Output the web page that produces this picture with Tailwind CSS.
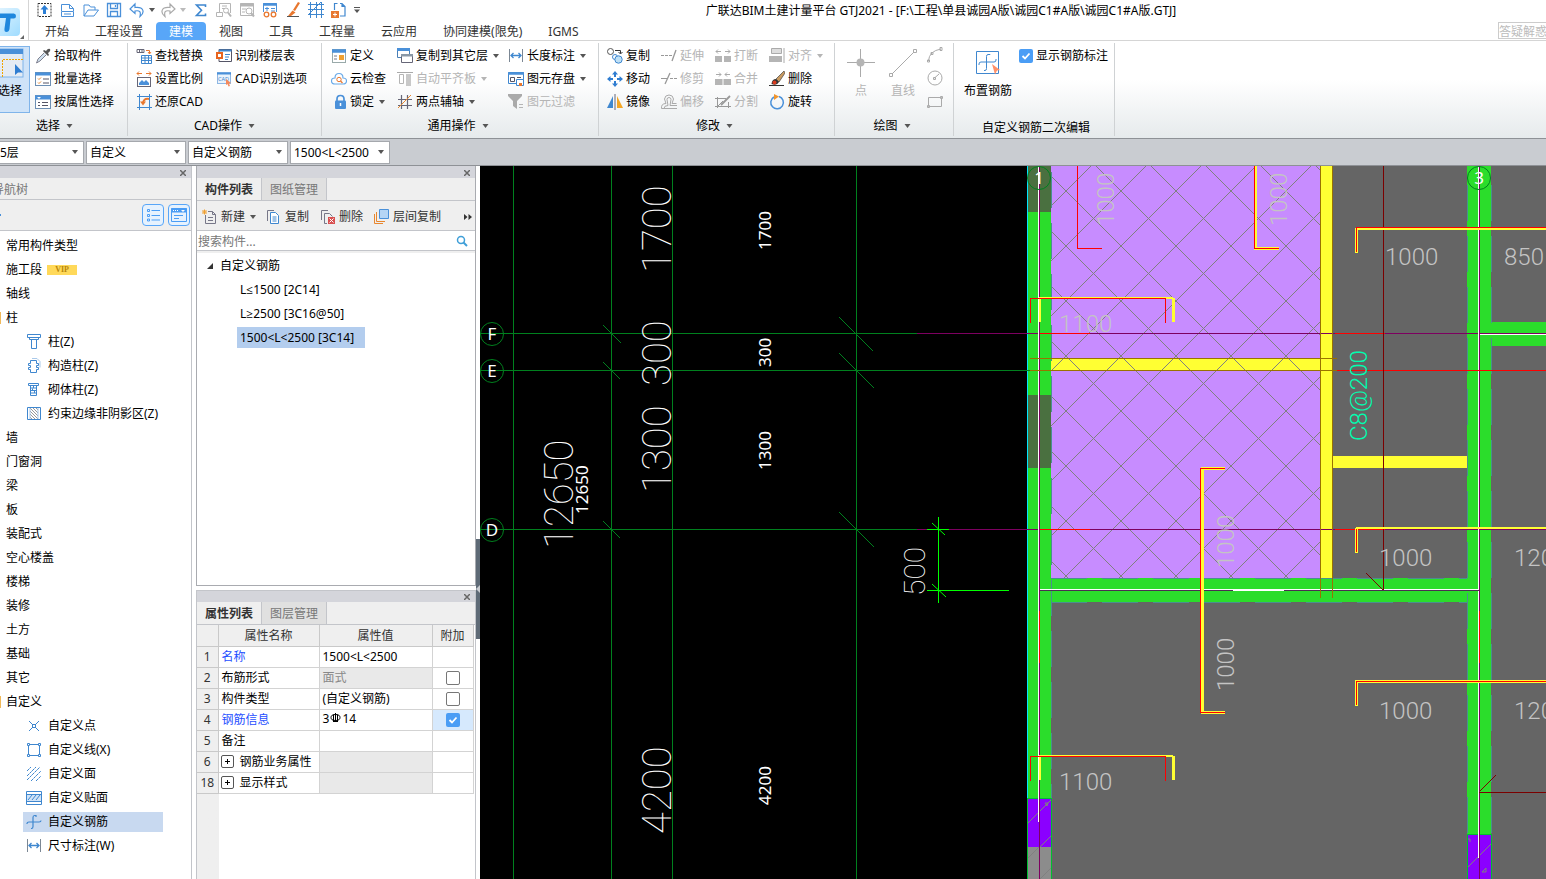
<!DOCTYPE html>
<html lang="zh-CN">
<head>
    <meta charset="UTF-8">
    <meta name="viewport" content="width=device-width, initial-scale=1.0">
    <title>广联达BIM土建计量平台 GTJ2021</title>
    <script src="https://cdn.jsdelivr.net/npm/@tailwindcss/browser@4"></script>
</head>
<body class="flex h-screen flex-col overflow-hidden bg-white font-['Noto_Sans','Noto_Sans_CJK_SC',sans-serif] text-xs text-black">

    <!-- 公用图标 -->
    <svg class="hidden">
        <symbol id="caret" viewBox="0 0 6 4"><path d="M0 0h6L3 4z" fill="currentColor"/></symbol>
        <symbol id="close" viewBox="0 0 6 6"><path d="M0 0l6 6M6 0L0 6" stroke="#666" stroke-width="1.5"/></symbol>
        <symbol id="dim" viewBox="0 0 16 16"><path d="M1.500 1v13M14.500 1v13" stroke="#7b8794" fill="none"/><path d="M3 7.500h10M5.500 5L3 7.500 5.500 10M10.500 5L13 7.500 10.500 10" stroke="#3f87cf" fill="none" stroke-width="1.300"/></symbol>
    </svg>

    <!-- 标题栏和选项卡 -->
    <header class="flex h-[41px] shrink-0 border-b border-[#d5d5d5]">
        <div class="relative w-[29px] shrink-0 overflow-hidden border-r border-[#d5d5d5]">
            <svg class="h-10 w-7" viewBox="0 0 28 40">
                <defs><linearGradient id="lg" x1="0" y1="0" x2="1" y2="1"><stop offset="0" stop-color="#eaf7ff"/><stop offset="1" stop-color="#9fdcff"/></linearGradient></defs>
                <rect x="-10" y="8" width="30" height="28" rx="4" fill="url(#lg)"/>
                <path d="M0 13.500h13q3-.5 3 2.500t-3 2.500h-2.500L9.500 29q-.5 3-3 3t-2-3.500L6 18H0z" fill="#1f87dd"/>
                <path d="M24 35v4h-4z" fill="#666"/>
            </svg>
        </div>
        <div class="flex min-w-0 flex-1 flex-col">
            <div class="flex h-[21px] items-center pl-2">
                <button class="w-[23px]" title="导入"><svg class="size-4" viewBox="0 0 16 16"><rect x="1" y="1.500" width="13" height="13" fill="none" stroke="#333" stroke-dasharray="2 1"/><path d="M7.500 3l4 4.500H9V12H6V7.500H3.500z" fill="#2c7fd6"/></svg></button>
                <button class="w-[23px]" title="新建"><svg class="size-4" viewBox="0 0 16 16" fill="none" stroke="#4a90d9"><path d="M1.500 9V2.500h8l4 4V9M9.500 2.500v4h4M1.500 9.500h12v5h-12zM4 12h7"/></svg></button>
                <button class="w-[23px]" title="打开"><svg class="size-4" viewBox="0 0 16 16" fill="none" stroke="#4a90d9"><path d="M1 14V3h5l1.500 2H12v3M1 14l4-6h10.500L11 14z"/></svg></button>
                <button class="w-[23px]" title="保存"><svg class="size-4" viewBox="0 0 16 16" fill="none" stroke="#4a90d9" stroke-width="1.300"><path d="M1.500 1.500h13v13h-13zM4.500 1.500v5h7v-5M4.500 14.500v-5h7v5M9.500 3v2"/></svg></button>
                <button class="flex w-[31px] items-center gap-1 text-[#555]" title="撤销"><svg class="size-4" viewBox="0 0 16 16" fill="none" stroke="#4a90d9" stroke-width="1.200"><path d="M6 2L1 7l5 4.500V9c5-1 6 1 5 5.500 5-4 4-10-5-9z"/></svg><svg class="h-1 w-1.5"><use href="#caret"/></svg></button>
                <button class="flex w-[33px] items-center gap-1 text-[#bbb]" title="恢复"><svg class="size-4" viewBox="0 0 16 16" fill="none" stroke="#aaa" stroke-width="1.200"><path d="M10 2l5 5-5 4.500V9C5 8 4 10 5 14.500 0 10.500 1 4.500 10 5.500z"/></svg><svg class="h-1 w-1.5"><use href="#caret"/></svg></button>
                <button class="w-[23px]" title="汇总"><svg class="size-4" viewBox="0 0 16 16" fill="none" stroke="#3f87cf" stroke-width="1.600"><path d="M12.500 5V3h-9l5 5.200-5 5.300h9v-2"/></svg></button>
                <button class="w-[23px]" title="查看工程量"><svg class="size-4" viewBox="0 0 16 16" fill="none" stroke="#b5b5b5"><path d="M3.500 10V1.500h11V11M.5 10.500h6v4h-6zM6 4h5M6 6.500h3"/><circle cx="10" cy="8.500" r="2.500"/><path d="M12 10.500l3 4" stroke-width="2"/></svg></button>
                <button class="w-[23px]" title="查看计算式"><svg class="size-4" viewBox="0 0 16 16" fill="none" stroke="#b5b5b5"><path d="M1.500 1.500h13v12h-13z"/><path d="M1 3h14" stroke-width="3"/><path d="M3 7h4M3 10h3"/><circle cx="10" cy="9" r="3"/><path d="M12 11l3 3.500" stroke-width="2"/></svg></button>
                <button class="w-[23px]" title="查看三维"><svg class="size-4" viewBox="0 0 16 16" fill="none"><path d="M1.500 10V1.500h13V10" stroke="#4a90d9"/><path d="M1 2.500h14" stroke="#4a90d9" stroke-width="2.500"/><path d="M3 6.500h4M9 6.500h4M5 5v4M9 9h4" stroke="#4a90d9"/><circle cx="4.500" cy="12.500" r="2.300" stroke="#e8772e" stroke-width="1.300"/><circle cx="11.500" cy="12.500" r="2.300" stroke="#e8772e" stroke-width="1.300"/></svg></button>
                <button class="w-[23px]" title="格式刷"><svg class="size-4" viewBox="0 0 16 16"><path d="M13 0l2 1-5 8-2-1z" fill="#e8772e"/><path d="M7.500 8.500l3 2-4.500 3.500H3z" fill="#e8772e"/><path d="M2 14.500h12" stroke="#555"/></svg></button>
                <button class="w-[23px]" title="轴网"><svg class="size-4" viewBox="0 0 16 16" fill="none" stroke="#3f87cf"><path d="M0 2.500h16M0 7.500h16M0 12.500h16M2.500 0v16M8.500 0v16M13.500 0v16M0 13L13 0"/></svg></button>
                <button class="w-[23px]" title="添加"><svg class="size-4" viewBox="0 0 16 16" fill="none"><path d="M3.500 8V1.500h3M9 1.500h2l3 3V14H9M11 1.500v3h3" stroke="#3f87cf" stroke-width="1.200"/><rect y="9" width="8" height="7" fill="#e8772e"/><path d="M4 10.500v4M2 12.500h4" stroke="#fff"/></svg></button>
                <button class="text-[#555]" title="更多"><svg class="h-1.5 w-1.5" viewBox="0 0 6 6"><path d="M0 .5h6" stroke="currentColor"/><path d="M0 2.500h6L3 6z" fill="currentColor"/></svg></button>
                <h1 class="flex-1 truncate pt-0.5 pr-6 text-center">广联达BIM土建计量平台 GTJ2021 - [F:\工程\单县诚园A版\诚园C1#A版\诚园C1#A版.GTJ]</h1>
            </div>
            <div class="flex h-5 items-end pl-[3px]">
                <nav class="flex text-[#333]">
                    <a href="#" class="h-[18px] px-[13px] leading-5">开始</a>
                    <a href="#" class="h-[18px] px-[13px] leading-5">工程设置</a>
                    <a href="#" class="h-[18px] rounded-t-sm bg-[#58a6f8] px-[13px] leading-5 text-white">建模</a>
                    <a href="#" class="h-[18px] px-[13px] leading-5">视图</a>
                    <a href="#" class="h-[18px] px-[13px] leading-5">工具</a>
                    <a href="#" class="h-[18px] px-[13px] leading-5">工程量</a>
                    <a href="#" class="h-[18px] px-[13px] leading-5">云应用</a>
                    <a href="#" class="h-[18px] px-[13px] leading-5">协同建模(限免)</a>
                    <a href="#" class="h-[18px] px-[13px] leading-5">IGMS</a>
                </nav>
                <input aria-label="答疑解惑" class="mb-px ml-auto h-[17px] w-12 border border-r-0 border-[#ccc] pt-0.5 placeholder:text-[#bbb]" placeholder="答疑解惑">
            </div>
        </div>
    </header>

    <!-- 功能区 -->
    <section class="flex h-[98px] shrink-0 border-b border-[#8e9196] bg-linear-to-b from-white from-40% to-[#e6eaec] py-0.5 whitespace-nowrap">
        <div class="flex w-32 flex-col border-r border-[#cfd2d4]">
            <div class="flex flex-1">
                <button class="mt-[3px] flex h-[67px] w-[30px] flex-col items-start border border-l-0 border-[#7fb4ea] bg-[#cfe3f8]">
                    <svg class="h-8 w-6" viewBox="0 0 24 32"><rect x="-6" y="2" width="29" height="28" fill="#e4ebf4" stroke="#7fb4ea"/><path d="M0 2h23v5H0z" fill="#4a90d9"/><path d="M2.500 30V12.500H23" fill="none" stroke="#f0a400" stroke-dasharray="2 1"/><path d="M15 17v11l3-2.500h5z" fill="#2f7dd1"/></svg>
                    <span class="mt-1 -ml-0.5">选择</span>
                </button>
                <div class="flex flex-col pt-px pl-[5px]">
                    <button class="flex h-[23px] items-center gap-[3px]"><svg class="size-4" viewBox="0 0 16 16"><path d="M15 1q-2-1-4 2L9 2 8 3l5 5 1-1-1-2q3-2 2-4z" fill="#555"/><path d="M9 5L3 11l-1.500 4L5 13l6-6" fill="#cfe0ee" stroke="#667" stroke-width=".8"/></svg>拾取构件</button>
                    <button class="flex h-[23px] items-center gap-[3px]"><svg class="size-4" viewBox="0 0 16 16" fill="none"><rect x=".5" y="1.500" width="15" height="13" fill="#fff" stroke="#6d8fb3"/><path d="M0 3h16" stroke="#4a90d9" stroke-width="3"/><path d="M3 7.500l1 1 2-2M3 11.500l1 1 2-2" stroke="#e8872e"/><path d="M8 8h6M8 12h6" stroke="#556"/></svg>批量选择</button>
                    <button class="flex h-[23px] items-center gap-[3px]"><svg class="size-4" viewBox="0 0 16 16" fill="none"><rect x=".5" y="1.500" width="15" height="13" fill="#fff" stroke="#6d8fb3"/><path d="M0 3.500h16" stroke="#4a90d9" stroke-width="4"/><path d="M2 3h4L4 5z" fill="#fff"/><path d="M3 8.500h2M7 8.500h6M3 11.500h2M7 11.500h6" stroke="#556"/></svg>按属性选择</button>
                </div>
            </div>
            <button class="flex h-[22px] items-center justify-center gap-1.5 pt-0.5 pr-[18px]">选择<svg class="h-1 w-[7px] text-[#555]"><use href="#caret"/></svg></button>
        </div>

        <div class="flex w-[194px] flex-col border-r border-[#cfd2d4]">
            <div class="flex flex-1 pt-px pl-2">
                <div class="w-20">
                    <button class="flex h-[23px] items-center gap-[3px]"><svg class="size-4" viewBox="0 0 16 16" fill="none"><path d="M1 1.500h7v3H1zM3.500 1.500v3M6 1.500v3" stroke="#667"/><path d="M10 2.500h3.500v3M12 4l1.500 2L15 4" stroke="#e8772e"/><path d="M5.500 7.500h10v8h-10zM5.500 10h10M5.500 12.500h10M9 7.500v8M12.500 7.500v8" stroke="#3f87cf"/></svg>查找替换</button>
                    <button class="flex h-[23px] items-center gap-[3px]"><svg class="size-4" viewBox="0 0 16 16" fill="none"><path d="M1 2.500h5M10 2.500h5M3 .5L1 2.500l2 2M13 .5l2 2-2 2" stroke="#e8772e"/><rect x="1.500" y="6.500" width="13" height="9" stroke="#667"/><path d="M3 14v-2l3-3 2 2 2-2 3 3v2z" fill="#4a90d9"/></svg>设置比例</button>
                    <button class="flex h-[23px] items-center gap-[3px]"><svg class="size-4" viewBox="0 0 16 16" fill="none"><path d="M3.500 0v16M13.500 0v16M1 2.500h15M1 13.500h15" stroke="#3f87cf"/><path d="M13 5q-6-1-6 5" stroke="#e8772e" stroke-width="2"/><path d="M4 7.500h6l-3 4z" fill="#e8772e"/></svg>还原CAD</button>
                </div>
                <div>
                    <button class="flex h-[23px] items-center gap-[3px]"><svg class="size-4" viewBox="0 0 16 16" fill="none"><path d="M3 1.500h12.500v12H3z" fill="#fff" stroke="#556"/><path d="M3 2.500h12.500" stroke="#3f87cf" stroke-width="2"/><rect x="0" y="4" width="7" height="7" fill="#e8641e"/><path d="M2 6h3v3H2z" fill="#fff"/><path d="M9 6.500h5M9 9h4M9 11.500h3" stroke="#3f87cf"/></svg>识别楼层表</button>
                    <button class="flex h-[23px] items-center gap-[3px]"><svg class="size-4" viewBox="0 0 16 16" fill="none"><rect x="1.500" y="1.500" width="13" height="11" fill="#eaf3fc" stroke="#8fb8e4"/><path d="M1 2.500h14" stroke="#4a90d9" stroke-width="2"/><text x="2" y="10" font-size="5.500" fill="#3f87cf">CAD</text><path d="M10 8l5 4-2 .5 1 2.500-1.500.5-1-2.500L10 14z" fill="#f58a5c"/></svg>CAD识别选项</button>
                </div>
            </div>
            <button class="flex h-[22px] items-center justify-center gap-1.5 pt-0.5">CAD操作<svg class="h-1 w-[7px] text-[#555]"><use href="#caret"/></svg></button>
        </div>

        <div class="flex w-[277px] flex-col border-r border-[#cfd2d4]">
            <div class="flex flex-1 pt-px pl-[9px]">
                <div class="w-[66px]">
                    <button class="flex h-[23px] items-center gap-[3px]"><svg class="size-4" viewBox="0 0 16 16" fill="none"><rect x="1.500" y="1.500" width="13" height="13" fill="#fff" stroke="#9aa"/><path d="M1 3h14" stroke="#4a90d9" stroke-width="3.500"/><path d="M3 8h3M3 11h3" stroke="#778"/><rect x="8" y="7" width="5" height="5" fill="#f0a030"/></svg>定义</button>
                    <button class="flex h-[23px] items-center gap-[3px]"><svg class="size-4" viewBox="0 0 16 16" fill="none"><path d="M4 13q-3.500 0-3.500-3T4 7q0-4.500 4-4.500T12 7q3.500 0 3.500 3T12 13z" stroke="#6aaae8" stroke-width="1.200"/><circle cx="8" cy="8.500" r="2.200" stroke="#e8772e"/><path d="M9.500 10l2 2" stroke="#e8772e" stroke-width="1.300"/></svg>云检查</button>
                    <button class="flex h-[23px] items-center gap-[3px]"><svg class="size-4" viewBox="0 0 16 16" fill="none"><path d="M6 7V5q0-3.500 3.500-3.500T13 5v2" stroke="#4a90d9" stroke-width="1.700"/><rect x="4" y="6.500" width="11" height="8.500" rx="1" fill="#4a90d9"/><path d="M9.500 9v3" stroke="#fff" stroke-width="1.500"/></svg>锁定<svg class="ml-0.5 h-1 w-1.5 text-[#555]"><use href="#caret"/></svg></button>
                </div>
                <div class="w-[111px]">
                    <button class="flex h-[23px] items-center gap-[3px]"><svg class="size-4" viewBox="0 0 16 16"><path d="M.5.5h12v9H.5z" fill="#fff" stroke="#4a7fb5"/><path d="M0 0h13v3H0z" fill="#4a90d9"/><path d="M4.500 6.500h11v8h-11z" fill="#fff" stroke="#667"/><path d="M4 6h12v2.500H4z" fill="#8a98a6"/></svg>复制到其它层<svg class="ml-0.5 h-1 w-1.5 text-[#555]"><use href="#caret"/></svg></button>
                    <button class="flex h-[23px] items-center gap-[3px] text-[#b5b5b5]"><svg class="size-4" viewBox="0 0 16 16"><path d="M0 1.500h16" stroke="#aaa"/><path d="M2.500 3.500h4v9h-4z" fill="#fff" stroke="#b5b5b5"/><path d="M9 3h5v12H9z" fill="#c8c8c8"/></svg>自动平齐板<svg class="ml-0.5 h-1 w-1.5"><use href="#caret"/></svg></button>
                    <button class="flex h-[23px] items-center gap-[3px]"><svg class="size-4" viewBox="0 0 16 16" fill="none"><path d="M4.500 1v14M10.500 1v14M1 5.500h14M1 11.500h14" stroke="#667" stroke-width="1.200"/><path d="M1 14L14 1" stroke="#e8872e"/></svg>两点辅轴<svg class="ml-0.5 h-1 w-1.5 text-[#555]"><use href="#caret"/></svg></button>
                </div>
                <div>
                    <button class="flex h-[23px] items-center gap-[3px]"><svg class="size-4"><use href="#dim"/></svg>长度标注<svg class="ml-0.5 h-1 w-1.5 text-[#555]"><use href="#caret"/></svg></button>
                    <button class="flex h-[23px] items-center gap-[3px]"><svg class="size-4" viewBox="0 0 16 16" fill="none"><path d="M.5 1.500h15v11H.5z" fill="#fff" stroke="#3f87cf"/><path d="M0 2.500h16" stroke="#4a90d9" stroke-width="2.500"/><path d="M2.500 6.500h4v4h-4zM9 6.500h4" stroke="#556"/><path d="M8.500 8.500h7v6h-7z" fill="#fff" stroke="#3f87cf"/><rect x="11" y="12" width="3" height="3" fill="#e8772e"/></svg>图元存盘<svg class="ml-0.5 h-1 w-1.5 text-[#555]"><use href="#caret"/></svg></button>
                    <button class="flex h-[23px] items-center gap-[3px] text-[#b5b5b5]"><svg class="size-4" viewBox="0 0 16 16"><path d="M0 0h14v2L9 7v8l-4-3V7L0 2z" fill="#aaa"/><path d="M11 10.500h4M11 13.500h4" stroke="#b5b5b5"/></svg>图元过滤</button>
                </div>
            </div>
            <button class="flex h-[22px] items-center justify-center gap-1.5 pt-0.5 pr-1">通用操作<svg class="h-1 w-[7px] text-[#555]"><use href="#caret"/></svg></button>
        </div>

        <div class="flex w-[236px] flex-col border-r border-[#cfd2d4]">
            <div class="flex flex-1 pt-px pl-2">
                <div class="w-[54px]">
                    <button class="flex h-[23px] items-center gap-[3px]"><svg class="size-4" viewBox="0 0 16 16" fill="none"><circle cx="3.500" cy="3.500" r="3" stroke="#555"/><path d="M8 2.500h5.500v3M11.500 4l2 2 2-2" stroke="#333"/><circle cx="8" cy="9" r="2.500" stroke="#3f87cf"/><circle cx="11.500" cy="11.500" r="3.700" fill="#bfe0f5" stroke="#3f87cf"/></svg>复制</button>
                    <button class="flex h-[23px] items-center gap-[3px]"><svg class="size-4" viewBox="0 0 16 16" fill="#2f7dd1"><path d="M8 0l3 3.500H9V6H7V3.500H5zM8 16l3-3.500H9V10H7v2.500H5zM0 8l3.500-3v2H6v2H3.500v2zM16 8l-3.500-3v2H10v2h2.500v2z"/></svg>移动</button>
                    <button class="flex h-[23px] items-center gap-[3px]"><svg class="size-4" viewBox="0 0 16 16"><path d="M6 2v12H0z" fill="#3f87cf"/><path d="M8 0v16" stroke="#667"/><path d="M10 2v12h6z" fill="#f5a623"/></svg>镜像</button>
                </div>
                <div class="w-[54px] text-[#b5b5b5]">
                    <button class="flex h-[23px] items-center gap-[3px]"><svg class="size-4" viewBox="0 0 16 16" fill="none" stroke="#999"><path d="M0 7.500h11" stroke-dasharray="3 1"/><path d="M15 2l-4 11" stroke-width="1.300"/></svg>延伸</button>
                    <button class="flex h-[23px] items-center gap-[3px]"><svg class="size-4" viewBox="0 0 16 16" fill="none" stroke="#999"><path d="M0 7.500h6"/><path d="M9 7.500h7" stroke-dasharray="3 1"/><path d="M9 2L4 13" stroke-width="1.300"/></svg>修剪</button>
                    <button class="flex h-[23px] items-center gap-[3px]"><svg class="size-4" viewBox="0 0 16 16" fill="none" stroke="#aaa"><path d="M.5 14.500q-.5-5 4.500-5L3.500 5Q4 1 8 1t4.500 4L11 9.500h4.500M3 14.500q0-3 4-3L6 5.500q0-2 2-2t2 2L9 11.500h7M.5 14.500H16"/></svg>偏移</button>
                </div>
                <div class="w-[54px] text-[#b5b5b5]">
                    <button class="flex h-[23px] items-center gap-[3px]"><svg class="size-4" viewBox="0 0 16 16" fill="none" stroke="#aaa"><path d="M1 3.500h5M10 3.500h5M3 1.500l-2 2 2 2M13 1.500l2 2-2 2"/><path d="M0 8h7v6H0zM9 8h7v6H9z" fill="#b5b5b5" stroke="none"/></svg>打断</button>
                    <button class="flex h-[23px] items-center gap-[3px]"><svg class="size-4" viewBox="0 0 16 16" fill="none" stroke="#aaa"><path d="M1 3.500h5M10 3.500h5M4 1.500l2 2-2 2M12 1.500l-2 2 2 2"/><path d="M0 8h7.500v6H0zM8.500 8H16v6H8.500z" fill="#b5b5b5" stroke="none"/></svg>合并</button>
                    <button class="flex h-[23px] items-center gap-[3px]"><svg class="size-4" viewBox="0 0 16 16" fill="none" stroke="#999"><path d="M2.500 3v11M0 4.500h11M0 12.500h16M13.500 8v6M3 12l5-5"/><path d="M15 2L8 9l-2 2" stroke-width="1.800"/></svg>分割</button>
                </div>
                <div>
                    <button class="flex h-[23px] items-center gap-[3px] text-[#b5b5b5]"><svg class="size-4" viewBox="0 0 16 16"><path d="M2.500.5h10v5h-10z" fill="#ddd" stroke="#aaa"/><path d="M0 8h13v6H0z" fill="#b5b5b5"/><path d="M15 0v15" stroke="#aaa"/></svg>对齐<svg class="ml-0.5 h-1 w-1.5"><use href="#caret"/></svg></button>
                    <button class="flex h-[23px] items-center gap-[3px]"><svg class="size-4" viewBox="0 0 16 16"><path d="M15 0L7 8l3 3 6-9z" fill="#c99a60" stroke="#444" stroke-width=".7"/><path d="M7 8q-4 0-4.500 5Q8 15 10 11z" fill="#333"/><circle cx="5.500" cy="11.500" r="2" fill="#d93a1e"/><path d="M0 14.500h15" stroke="#333"/></svg>删除</button>
                    <button class="flex h-[23px] items-center gap-[3px]"><svg class="size-4" viewBox="0 0 16 16" fill="none"><path d="M10 2.500A6.300 6.300 0 1 1 5 3" stroke="#4a90d9" stroke-width="1.500"/><path d="M5 0l5 2.500L5 6z" fill="#f0952e"/></svg>旋转</button>
                </div>
            </div>
            <button class="flex h-[22px] items-center justify-center gap-1.5 pt-0.5 pr-1">修改<svg class="h-1 w-[7px] text-[#555]"><use href="#caret"/></svg></button>
        </div>

        <div class="flex w-[119px] flex-col border-r border-[#cfd2d4]">
            <div class="flex flex-1 text-[#b5b5b5]">
                <button class="ml-3 flex w-7 flex-col items-center gap-1.5 pt-1.5"><svg class="h-7 w-7" viewBox="0 0 28 28"><path d="M13.500 0v28M0 13.500h28" stroke="#aaa"/><circle cx="13.500" cy="13.500" r="4" fill="#b5b5b5"/></svg>点</button>
                <button class="ml-3 flex w-8 flex-col items-center gap-1.5 pt-1.5"><svg class="h-7 w-7" viewBox="0 0 28 28" fill="none" stroke="#aaa"><path d="M3 25L25 3"/><path d="M24.500.5h3v3h-3zM.5 24.500h3v3h-3z"/></svg>直线</button>
                <div class="ml-2 flex flex-col gap-[7px] pt-1">
                    <button class="flex" title="圆弧"><svg class="size-4" viewBox="0 0 16 16" fill="none" stroke="#aaa"><path d="M1.500 14Q2 4 14 2M.5 13h2v2h-2zM4 5.500h2v2H4zM13 .5h2v3h-2z"/></svg></button>
                    <button class="flex" title="圆"><svg class="size-4" viewBox="0 0 16 16" fill="none" stroke="#aaa"><circle cx="8" cy="8" r="7"/><path d="M7.500 8L12 4M6.500 7.500h2v2h-2z"/></svg></button>
                    <button class="flex" title="矩形"><svg class="size-4" viewBox="0 0 16 16" fill="none" stroke="#aaa"><path d="M1.500 4.500h13v9h-13zM.5 12.500h2v2h-2zM13.500 3.500h2v2h-2z"/></svg></button>
                </div>
            </div>
            <button class="flex h-[22px] items-center justify-center gap-1.5 pt-0.5 pr-1">绘图<svg class="h-1 w-[7px] text-[#555]"><use href="#caret"/></svg></button>
        </div>

        <div class="flex w-[161px] flex-col border-r border-[#cfd2d4]">
            <div class="flex flex-1">
                <button class="ml-2.5 flex w-12 flex-col items-center gap-2 pt-2"><svg class="h-6 w-6" viewBox="0 0 24 24" fill="none" stroke="#3f87cf"><path d="M.5.5h22v22H.5z"/><path d="M14 4V3.500H12q-1.500 0-1.500 2v12q0 2-1.500 2H8M3 14v-1q0-2 2-2h13q2 0 2-2V8"/><path d="M16 13l8 6-3 .5-2 4z" fill="#ff9068" stroke="none"/></svg>布置钢筋</button>
                <label class="ml-[7px] flex h-[26px] items-center gap-[3px]">
                    <span class="relative flex">
                        <input type="checkbox" checked class="size-3.5 appearance-none rounded-xs bg-[#4a9df5]">
                        <svg class="pointer-events-none absolute size-3.5" viewBox="0 0 14 14"><path d="M3.500 7l2.500 2.500L10.500 4.500" fill="none" stroke="#fff" stroke-width="1.800"/></svg>
                    </span>显示钢筋标注
                </label>
            </div>
            <p class="h-4 pl-1 text-center leading-4">自定义钢筋二次编辑</p>
        </div>
    </section>

    <!-- 楼层 / 构件选择 -->
    <div class="flex h-[27px] shrink-0 items-center gap-1 border-b border-[#8e9196] bg-[#c9ccd1]">
        <div class="relative flex h-[23px] w-[84px] items-center border border-l-0 border-[#a5a8ad] bg-white text-[#555]">
            <select aria-label="楼层" class="h-full w-full appearance-none pt-0.5 text-black"><option>5层</option></select><svg class="pointer-events-none absolute right-[5px] h-1 w-1.5"><use href="#caret"/></svg>
        </div>
        <div class="relative -ml-0.5 flex h-[23px] w-[100px] items-center border border-[#a5a8ad] bg-white text-[#555]">
            <select aria-label="构件大类" class="h-full w-full appearance-none pt-0.5 pl-[3px] text-black"><option>自定义</option></select><svg class="pointer-events-none absolute right-[5px] h-1 w-1.5"><use href="#caret"/></svg>
        </div>
        <div class="relative -ml-0.5 flex h-[23px] w-[100px] items-center border border-[#a5a8ad] bg-white text-[#555]">
            <select aria-label="构件类型" class="h-full w-full appearance-none pt-0.5 pl-[3px] text-black"><option>自定义钢筋</option></select><svg class="pointer-events-none absolute right-[5px] h-1 w-1.5"><use href="#caret"/></svg>
        </div>
        <div class="relative -ml-0.5 flex h-[23px] w-[100px] items-center border border-[#a5a8ad] bg-white text-[#555]">
            <select aria-label="构件" class="h-full w-full appearance-none pt-0.5 pl-[3px] text-black"><option>1500&lt;L&lt;2500</option></select><svg class="pointer-events-none absolute right-[5px] h-1 w-1.5"><use href="#caret"/></svg>
        </div>
    </div>

    <main class="flex min-h-0 flex-1">
        <!-- 导航树 -->
        <aside class="flex w-48 shrink-0 flex-col overflow-hidden border-r border-[#c3c5ca] whitespace-nowrap">
            <div class="flex h-3 shrink-0 items-center justify-end bg-[#d4d5db] pt-px pr-[5px]"><button class="flex" title="关闭"><svg class="size-1.5"><use href="#close"/></svg></button></div>
            <h2 class="-ml-2 h-[22px] shrink-0 border-b border-[#c3c5ca] bg-[#efefef] leading-6 text-[#777]">导航树</h2>
            <div class="flex h-[31px] shrink-0 items-center justify-end gap-1 border-b border-[#c3c5ca] bg-[#efefef] pr-px">
                <span class="mr-auto h-0.5 w-px bg-[#4a90d9]"></span>
                <button class="flex size-[22px] items-center justify-center rounded-sm border border-[#58a6f8] bg-[#e6f2fe]" title="列表"><svg class="size-4" viewBox="0 0 16 16" fill="none" stroke="#4a9df5"><path d="M2.500 2.500h2v2h-2zM2.500 7.500h2v2h-2zM2.500 12h2v2h-2zM6.500 3.500H15M6.500 8.500H15M6.500 13H15"/></svg></button>
                <button class="flex size-[22px] items-center justify-center rounded-sm border border-[#58a6f8] bg-[#e6f2fe]" title="面板"><svg class="size-4" viewBox="0 0 16 16" fill="none" stroke="#4a9df5"><path d="M.5 1.500h15v13H.5z"/><path d="M0 3.500h16" stroke-width="4"/><path d="M2 3.500h5" stroke="#fff" stroke-dasharray="1 1"/><path d="M10 3h4l-2 2z" fill="#fff" stroke="none"/><path d="M3 8.500h9M3 11.500h5"/></svg></button>
            </div>
            <ul class="pt-[3px] leading-6">
                <li class="h-6 pl-1.5">常用构件类型</li>
                <li class="flex h-6 items-center gap-[5px] pl-1.5">施工段<span class="h-2.5 w-[30px] bg-[#ffd95a] text-center font-['Liberation_Serif',serif] text-[8px] leading-[10px] font-bold text-[#b8860b]">VIP</span></li>
                <li class="h-6 pl-1.5">轴线</li>
                <li class="flex h-6 items-center gap-[5px]"><span class="h-3 w-px bg-[#f0b95a]"></span>柱</li>
                <li class="flex h-6 items-center gap-1.5 pl-[26px]"><svg class="size-4" viewBox="0 0 16 16" fill="none" stroke="#3f87cf"><path d="M1.500.5h13v3h-13zM3.500 3.500v2h9v-2M5.500 5.500v9h5v-9"/></svg>柱(Z)</li>
                <li class="flex h-6 items-center gap-1.5 pl-[26px]"><svg class="size-4" viewBox="0 0 16 16" fill="none"><path d="M6 .5h5l3 3v6" stroke="#a9c9ea"/><path d="M4.500 2.500h6v3h2v2h-2v2h2v2h-2v3h-6v-3h-2v-2h2v-2h-2v-2h2z" stroke="#3f87cf"/></svg>构造柱(Z)</li>
                <li class="flex h-6 items-center gap-1.5 pl-[26px]"><svg class="size-4" viewBox="0 0 16 16" fill="none" stroke="#3f87cf"><path d="M2.500 1.500h10v2h-10zM4.500 3.500v10h6v-10M4.500 6h6M4.500 8.500h6M4.500 11h6M7.500 4v2M6.500 6.500v2M8.500 9v2"/></svg>砌体柱(Z)</li>
                <li class="flex h-6 items-center gap-1.5 pl-[26px]"><svg class="size-4" viewBox="0 0 16 16" fill="none"><path d="M4 2l8 8M4 5l8 8M4 8l5 5M4 11l2 2M7 2l5 5M10 2l2 2" stroke="#999"/><path d="M4 2v11M12 2v11" stroke="#a9c9ea"/><path d="M1.500 1.500h13v12h-13z" stroke="#3f87cf"/></svg>约束边缘非阴影区(Z)</li>
                <li class="h-6 pl-1.5">墙</li>
                <li class="h-6 pl-1.5">门窗洞</li>
                <li class="h-6 pl-1.5">梁</li>
                <li class="h-6 pl-1.5">板</li>
                <li class="h-6 pl-1.5">装配式</li>
                <li class="h-6 pl-1.5">空心楼盖</li>
                <li class="h-6 pl-1.5">楼梯</li>
                <li class="h-6 pl-1.5">装修</li>
                <li class="h-6 pl-1.5">土方</li>
                <li class="h-6 pl-1.5">基础</li>
                <li class="h-6 pl-1.5">其它</li>
                <li class="flex h-6 items-center gap-[5px]"><span class="h-3 w-px bg-[#f0b95a]"></span>自定义</li>
                <li class="flex h-6 items-center gap-1.5 pl-[26px]"><svg class="size-4" viewBox="0 0 16 16" fill="none" stroke="#3f87cf"><path d="M3 3l4 4M13 3L9 7M3 13l4-4M13 13L9 9M6.500 6.500h3v3h-3z"/></svg>自定义点</li>
                <li class="flex h-6 items-center gap-1.5 pl-[26px]"><svg class="size-4" viewBox="0 0 16 16" fill="none" stroke="#3f87cf"><path d="M3 2.500h10M3 13.500h10M2.500 3v10M13.500 3v10"/><path d="M1.500 1.500h2v2h-2zM12.500 1.500h2v2h-2zM1.500 12.500h2v2h-2zM12.500 12.500h2v2h-2z" fill="#fff"/></svg>自定义线(X)</li>
                <li class="flex h-6 items-center gap-1.5 pl-[26px]"><svg class="size-4" viewBox="0 0 16 16" fill="none" stroke="#3f87cf"><path d="M1 5l4-4M1 10l9-9M1 14L14 1M5 15L15 5M10 15l5-5" stroke-dasharray="3 .6"/></svg>自定义面</li>
                <li class="flex h-6 items-center gap-1.5 pl-[26px]"><svg class="size-4" viewBox="0 0 16 16" fill="none" stroke="#3f87cf"><path d="M1 5h14v6H1z" fill="#cfe3f8" stroke="none"/><path d="M.5 1.500h15v13H.5zM.5 4.500h15M.5 11.500h15M2 10l4-5M6 10l4-5M10 10l4-5"/></svg>自定义贴面</li>
                <li class="ml-[23px] flex h-6 w-[140px] items-center"><a href="#" class="flex h-5 w-full items-center gap-1.5 bg-[#c8d9f0] pl-[3px]"><svg class="size-4" viewBox="0 0 16 16" fill="none" stroke="#3f87cf" stroke-width="1.200"><path d="M10 3V1.500H8.500q-1.500 0-1.500 2v9q0 2-1.500 2H5M1 10V9.500q0-1.500 2-1.500h10q2 0 2-1.500"/></svg>自定义钢筋</a></li>
                <li class="flex h-6 items-center gap-1.5 pl-[26px]"><svg class="size-4"><use href="#dim"/></svg>尺寸标注(W)</li>
            </ul>
        </aside>

        <div class="ml-1 flex w-[280px] shrink-0 flex-col whitespace-nowrap">
            <!-- 构件列表 -->
            <section class="flex h-[420px] shrink-0 flex-col border border-t-0 border-[#a9abb0]">
                <div class="flex h-3 shrink-0 items-center justify-end bg-[#d4d5db] pt-px pr-[5px]"><button class="flex" title="关闭"><svg class="size-1.5"><use href="#close"/></svg></button></div>
                <div class="flex h-[23px] shrink-0 border-b border-[#c3c5ca] bg-[#efefef] leading-6">
                    <button class="w-16 font-bold text-[#333]">构件列表</button>
                    <button class="w-[66px] border-x border-[#c3c5ca] bg-[#e0e0e0] text-[#777]">图纸管理</button>
                </div>
                <div class="flex h-[30px] shrink-0 items-center border-b border-[#c3c5ca] bg-[#efefef] pt-0.5 pl-[5px] text-[#333]">
                    <button class="flex w-16 items-center gap-[3px]"><svg class="size-4" viewBox="0 0 16 16" fill="none"><path d="M3.500 6v8.500h10v-9l-3-3H6M10.500 2.500v3h3M6 8.500h5M6 11.500h5" stroke="#778"/><path d="M0 3h5M2.500.5v5M.5 1l4 4M4.500 1l-4 4" stroke="#f0a030"/></svg>新建<svg class="ml-0.5 h-1 w-1.5 text-[#555]"><use href="#caret"/></svg></button>
                    <button class="flex w-[54px] items-center gap-[3px]"><svg class="size-4" viewBox="0 0 16 16" fill="none"><path d="M1.500 12V1.500H8" stroke="#778"/><path d="M4.500 3.500h5l3 3v8h-8zM6.500 8h4M6.500 10h4M6.500 12h4" stroke="#3f87cf" fill="#fff"/></svg>复制</button>
                    <button class="flex w-[54px] items-center gap-[3px]"><svg class="size-4" viewBox="0 0 16 16" fill="none"><path d="M1.500 11V1.500H8M7 14.500H4.500v-10h5l3 3" stroke="#778"/><path d="M8 8h7v7H8z" fill="#d95050"/><path d="M9.500 9.500l4 4M13.500 9.500l-4 4" stroke="#fff"/></svg>删除</button>
                    <button class="flex items-center gap-[3px]"><svg class="size-4" viewBox="0 0 16 16" fill="none"><path d="M.5 5v9.500H9M2.500 3v9.500H11" stroke="#e8872e"/><path d="M5.500.5h9v9h-9z" fill="#b5d5f5" stroke="#4a90d9"/></svg>层间复制</button>
                    <button class="mr-[3px] ml-auto flex" title="更多"><svg class="h-1.5 w-2" viewBox="0 0 8 6"><path d="M0 0l3.500 3L0 6zM4.500 0L8 3 4.500 6z" fill="#333"/></svg></button>
                </div>
                <div class="flex h-5 shrink-0 items-center border-b border-[#c3c5ca] pt-px pr-[7px]">
                    <input aria-label="搜索构件" class="h-full min-w-0 flex-1 pt-px pl-px placeholder:text-[#777]" placeholder="搜索构件..."><svg class="size-3" viewBox="0 0 12 12" fill="none" stroke="#3f9fd8" stroke-width="1.500"><circle cx="5" cy="5" r="3.500"/><path d="M7.500 7.500l3.500 3.500" stroke-width="2"/></svg>
                </div>
                <ul class="border-t-2 border-[#efefef] pl-[9px] font-['Noto_Sans','Open_Sans','Noto_Sans_CJK_SC',sans-serif] leading-6">
                    <li class="flex h-6 items-center gap-1.5 pt-px"><svg class="h-2 w-2" viewBox="0 0 8 8"><path d="M7 1v6H1z" fill="#333"/></svg>自定义钢筋</li>
                    <li class="h-6 pt-px pl-[34px]">L≤1500 [2C14]</li>
                    <li class="h-6 pt-px pl-[34px]">L≥2500 [3C16@50]</li>
                    <li class="h-6 pt-px pl-[31px]"><a href="#" class="inline-block h-[21px] w-32 bg-[#b3cdee] pl-[3px] leading-[21px]">1500&lt;L&lt;2500 [3C14]</a></li>
                </ul>
            </section>

            <!-- 属性列表 -->
            <section class="mt-1 flex min-h-0 flex-1 flex-col border border-b-0 border-[#c3c5ca]">
                <div class="flex h-[11px] shrink-0 items-center justify-end bg-[#d4d5db] pr-[5px]"><button class="flex" title="关闭"><svg class="size-1.5"><use href="#close"/></svg></button></div>
                <div class="flex h-[23px] shrink-0 border-b border-[#c3c5ca] bg-[#efefef] leading-6">
                    <button class="w-16 font-bold text-[#333]">属性列表</button>
                    <button class="w-[66px] border-x border-[#c3c5ca] bg-[#e0e0e0] text-[#777]">图层管理</button>
                </div>
                <div class="flex-1 bg-linear-to-r from-[#efefef] from-[22px] to-white to-[22px]">
                    <table class="w-[276px] table-fixed border-collapse leading-4">
                        <colgroup><col class="w-[21px]"><col class="w-[101px]"><col class="w-[113px]"><col class="w-[41px]"></colgroup>
                        <thead>
                            <tr class="h-[21px] bg-[#efefef] text-[#333]">
                                <th class="border-r border-b border-[#c9c9c9] p-0"></th>
                                <th class="border-r border-b border-[#c9c9c9] p-0 pt-px font-normal">属性名称</th>
                                <th class="border-r border-b border-[#c9c9c9] p-0 pt-px font-normal">属性值</th>
                                <th class="border-r border-b border-[#c9c9c9] p-0 pt-px font-normal">附加</th>
                            </tr>
                        </thead>
                        <tbody>
                            <tr class="h-[21px]">
                                <td class="border-r border-b border-[#c9c9c9] bg-[#efefef] p-0 text-center text-[#333]">1</td>
                                <td class="border-r border-b border-[#d3d3d3] p-0 pl-[3px] text-[#1f4fff]">名称</td>
                                <td class="border-r border-b border-[#d3d3d3] p-0 pl-[3px]">1500&lt;L&lt;2500</td>
                                <td class="border-r border-b border-[#d3d3d3] p-0"></td>
                            </tr>
                            <tr class="h-[21px]">
                                <td class="border-r border-b border-[#c9c9c9] bg-[#efefef] p-0 text-center text-[#333]">2</td>
                                <td class="border-r border-b border-[#d3d3d3] p-0 pl-[3px]">布筋形式</td>
                                <td class="border-r border-b border-[#d3d3d3] bg-[#e9e9e9] p-0 pl-[3px] text-[#888]">面式</td>
                                <td class="border-r border-b border-[#d3d3d3] p-0"><input type="checkbox" aria-label="附加布筋形式" class="mx-auto block size-3.5 appearance-none rounded-xs border border-[#777] bg-white"></td>
                            </tr>
                            <tr class="h-[21px]">
                                <td class="border-r border-b border-[#c9c9c9] bg-[#efefef] p-0 text-center text-[#333]">3</td>
                                <td class="border-r border-b border-[#d3d3d3] p-0 pl-[3px]">构件类型</td>
                                <td class="border-r border-b border-[#d3d3d3] p-0 pl-[3px]">(自定义钢筋)</td>
                                <td class="border-r border-b border-[#d3d3d3] p-0"><input type="checkbox" aria-label="附加构件类型" class="mx-auto block size-3.5 appearance-none rounded-xs border border-[#777] bg-white"></td>
                            </tr>
                            <tr class="h-[21px]">
                                <td class="border-r border-b border-[#c9c9c9] bg-[#efefef] p-0 text-center text-[#333]">4</td>
                                <td class="border-r border-b border-[#d3d3d3] p-0 pl-[3px] text-[#1f4fff]">钢筋信息</td>
                                <td class="border-r border-b border-[#d3d3d3] p-0 pb-0.5 pl-[3px]"><span class="flex items-center gap-px">3<svg class="size-[11px]" viewBox="0 0 11 11" fill="none" stroke="#000"><ellipse cx="5.500" cy="4.500" rx="4.500" ry="3"/><path d="M5.500 0v9M3.500 1.500v7M7.500 1.500v7M3 8.500h5"/></svg>14</span></td>
                                <td class="border-r border-b border-[#d3d3d3] bg-[#d6e9fd] p-0"><span class="relative mx-auto block size-3.5"><input type="checkbox" checked aria-label="附加钢筋信息" class="block size-3.5 appearance-none rounded-xs bg-[#4a9df5]"><svg class="pointer-events-none absolute inset-0 size-3.5" viewBox="0 0 14 14"><path d="M3.500 7l2.500 2.500L10.500 4.500" fill="none" stroke="#fff" stroke-width="1.800"/></svg></span></td>
                            </tr>
                            <tr class="h-[21px]">
                                <td class="border-r border-b border-[#c9c9c9] bg-[#efefef] p-0 text-center text-[#333]">5</td>
                                <td class="border-r border-b border-[#d3d3d3] p-0 pl-[3px]">备注</td>
                                <td class="border-r border-b border-[#d3d3d3] p-0"></td>
                                <td class="border-r border-b border-[#d3d3d3] p-0"></td>
                            </tr>
                            <tr class="h-[21px]">
                                <td class="border-r border-b border-[#c9c9c9] bg-[#efefef] p-0 text-center text-[#333]">6</td>
                                <td class="border-r border-b border-[#d3d3d3] p-0 pl-0.5"><span class="flex items-center gap-1.5"><button class="flex" title="展开"><svg class="size-[13px]" viewBox="0 0 13 13" fill="none" stroke="#555"><rect x=".5" y=".5" width="12" height="12" rx="1.500"/><path d="M4 6.500h5M6.500 4v5" stroke="#000"/></svg></button>钢筋业务属性</span></td>
                                <td class="border-r border-b border-[#d3d3d3] bg-[#e9e9e9] p-0"></td>
                                <td class="border-r border-b border-[#d3d3d3] p-0"></td>
                            </tr>
                            <tr class="h-[21px]">
                                <td class="border-r border-b border-[#c9c9c9] bg-[#efefef] p-0 text-center text-[#333]">18</td>
                                <td class="border-r border-b border-[#d3d3d3] p-0 pl-0.5"><span class="flex items-center gap-1.5"><button class="flex" title="展开"><svg class="size-[13px]" viewBox="0 0 13 13" fill="none" stroke="#555"><rect x=".5" y=".5" width="12" height="12" rx="1.500"/><path d="M4 6.500h5M6.500 4v5" stroke="#000"/></svg></button>显示样式</span></td>
                                <td class="border-r border-b border-[#d3d3d3] bg-[#e9e9e9] p-0"></td>
                                <td class="border-r border-b border-[#d3d3d3] p-0"></td>
                            </tr>
                        </tbody>
                    </table>
                </div>
            </section>
        </div>

        <div class="flex w-1 shrink-0 flex-col justify-center pt-[133px]">
            <button class="flex h-[100px] w-1 items-center bg-[#5f6b77]" title="折叠"><svg class="h-2 w-1" viewBox="0 0 4 8"><path d="M4 0v8L0 4z" fill="#c9ccd1"/></svg></button>
        </div>

        <!-- 绘图区 -->
        <svg class="min-w-0 flex-1 bg-black" viewBox="480 166 1066 713" preserveAspectRatio="xMinYMin slice" fill="none">
            <defs>
                <pattern id="hatch" x="1066" y="191" width="55" height="55" patternUnits="userSpaceOnUse"><path d="M-5-5l65 65M60-5L-5 60M-5 5L5-5M50 60l10-10M50-5L60 5M-5 50L5 60" stroke="#808080" fill="none"/></pattern>
            </defs>

            <!-- 底板、梁 -->
            <g shape-rendering="crispEdges">
                <path d="M1027 166h519v713h-519z" fill="#656565"/>
                <path d="M1051 166h269v412h-269z" fill="#c78cff"/>
                <path d="M1051 358h269v12h-269zM1320 166h13v412h-13zM1332 456h135v12h-135z" fill="#ffff33"/>
            </g>
            <path d="M1051 166h269v412h-269z" fill="url(#hatch)"/>
            <g shape-rendering="crispEdges">
                <path d="M1027 166h24v632h-24zM1467 166h24v668h-24zM1051 578h416v24h-416zM1491 322h55v24h-55z" fill="#2bdd2b"/>
                <path d="M1027 166h24v46h-24zM1027 395h24v73h-24z" fill="#4a7040"/>
                <path d="M1027.500 166v632" stroke="#00e5ff"/>
                <path d="M1051.500 172v626M1467.500 185v649M1491.500 185v649M1051 578.500h416M1051 602.500h416" stroke="#4a8f8f" stroke-dasharray="36 15"/>
                <path d="M1027 799h24v48h-24zM1467 835h24v44h-24z" fill="#8b00ff"/>
                <path d="M1027 847h24v32h-24z" fill="#8c8c8c"/>
                <path d="M1027.500 879v-80.500h24V879M1467.500 879v-44.500h24V879" stroke="#00c030"/>
            </g>
            <path d="M1028 823l23-23M1040 847l11-11M1028 858l11-11M1040 879l11-11M1468 867l23-23M1045 803h3l-1 3zM1482 872h4v-4zM1468 839h2v3" stroke="#808080"/>

            <!-- 轴线 -->
            <g shape-rendering="crispEdges">
                <path d="M513.500 166v713M611.500 166v713M672.500 166v713M856.500 166v713M480 333.500h437M480 370.500h550M480 529.500h437" stroke="#00801e"/>
                <path d="M917 333.500h629M917 529.500h629M1039.500 166v713M1479.500 166v713" stroke="#7d0060"/>
                <path d="M1038.500 166v656M1478.500 166v692M1040 589.500h439M1480 334.500h66" stroke="#fff"/>
                <path d="M1040 590.500h439" stroke="#4a3050"/>
                <path d="M1233 590h51" stroke="#fff" stroke-width="2"/>
                <path d="M1335 370.500h211M1040 333.500h50M1335 333.500h50M1040 529.500h50M1335 529.500h50M1039.500 611v52M1479.500 611v52" stroke="#f00"/>
                <path d="M1030 358.500h307M1030 370.500h307M1320.500 166v432M1332.500 166v432" stroke="#997300"/>
                <path d="M1383.500 166v424M1479 792.500h67" stroke="#7b0000"/>
            </g>
            <path d="M1366 573l17 17M1480 791l16-16" stroke="#7b0000"/>
            <path d="M603 325l18 18M603 362l17 17M603 521l17 17M839 317l34 34M839 353l35 35M839 512l35 35" stroke="#00801e"/>
            <g stroke="#00801e"><circle cx="492" cy="334" r="11.500"/><circle cx="492" cy="371" r="11.500"/><circle cx="492" cy="530" r="11.500"/><circle cx="1039" cy="178" r="11.500"/><circle cx="1479" cy="178" r="11.500"/></g>

            <!-- 尺寸线 -->
            <path d="M938.500 517v86M927 529.500h22M927 590.500h82" stroke="#0f0" shape-rendering="crispEdges"/>
            <path d="M932 523l13 12M932 584l14 13" stroke="#0f0"/>

            <!-- 钢筋 -->
            <g shape-rendering="crispEdges">
                <path d="M1255.500 166v82.500h23M1225 468.500h-23v244h23M1356.500 228v25M1356.500 528v25M1356.500 680v26M1356 681.500h190" stroke="#ffff33" stroke-width="3"/>
                <path d="M1546 229h-190M1546 528h-190M1040 322v-24h133M1040 780v-24h133" stroke="#ffff33" stroke-width="2"/>
                <path d="M1173.500 298v24M1173.500 756v24" stroke="#ffff33" stroke-width="3"/>
                <path d="M1077.500 166v82h24M1254.500 166v82.500h24M1225 468.500h-24.500v244h24.500M1030.500 323v-24.500h135V323M1030.500 781v-24.500h135V781M1356.500 252v-24.500h190M1356.500 552v-23M1356.500 705v-23.500h190" stroke="#f00"/>
            </g>

            <!-- 标注文字 -->
            <g class="font-['Roboto',sans-serif] font-thin" fill="#fff" font-size="40">
                <text transform="translate(671 273) rotate(-90)">1700</text>
                <text transform="translate(671 386) rotate(-90)">300</text>
                <text transform="translate(671 493) rotate(-90)">1300</text>
                <text transform="translate(573 549) rotate(-90)">12650</text>
                <text transform="translate(671 834) rotate(-90)">4200</text>
                <text transform="translate(925 596) rotate(-90)" font-size="30">500</text>
            </g>
            <g class="font-['Noto_Sans',sans-serif]" fill="#fff" font-size="17">
                <text transform="translate(771 250) rotate(-90)">1700</text>
                <text transform="translate(771 367) rotate(-90)">300</text>
                <text transform="translate(771 470) rotate(-90)">1300</text>
                <text transform="translate(588 514) rotate(-90)">12650</text>
                <text transform="translate(771 805) rotate(-90)">4200</text>
                <g text-anchor="middle"><text x="492" y="340">F</text><text x="492" y="377">E</text><text x="492" y="536">D</text><text x="1039" y="184">1</text><text x="1479" y="184">3</text></g>
            </g>
            <g class="font-['Roboto',sans-serif] font-light" fill="#c4c4c4" font-size="24">
                <text transform="translate(1114 226) rotate(-90)">1000</text>
                <text transform="translate(1287 226) rotate(-90)">1000</text>
                <text transform="translate(1234 568) rotate(-90)">1000</text>
                <text transform="translate(1234 691) rotate(-90)">1000</text>
                <text x="1059" y="332">1100</text>
                <text x="1059" y="790">1100</text>
                <text x="1385" y="265">1000</text>
                <text x="1504" y="265">850</text>
                <text x="1379" y="566">1000</text>
                <text x="1514" y="566">120</text>
                <text x="1379" y="719">1000</text>
                <text x="1514" y="719">120</text>
                <text transform="translate(1367 441) rotate(-90)" fill="#00ffb0">C8@200</text>
            </g>
        </svg>
    </main>
</body>
</html>
